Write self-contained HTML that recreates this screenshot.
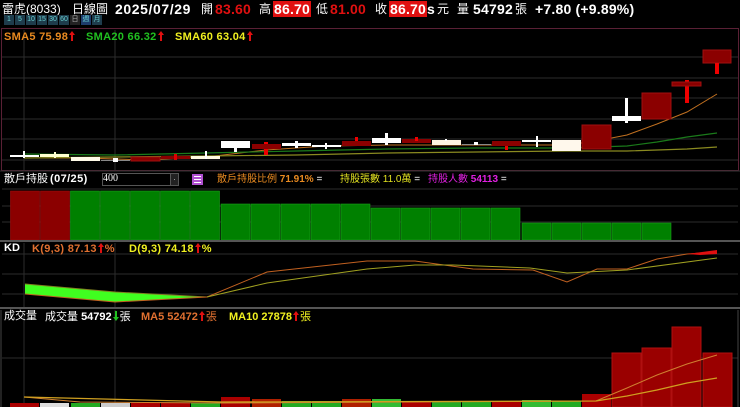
<!DOCTYPE html>
<html><head><meta charset="utf-8"><style>
*{margin:0;padding:0;box-sizing:border-box}
body{width:740px;height:407px;background:#000;overflow:hidden;position:relative;font-family:"Liberation Sans","Noto Sans CJK TC",sans-serif;color:#fff}
.t{position:absolute;white-space:nowrap;line-height:1}
.b{font-weight:bold}
.h{font-size:14px;top:2px;letter-spacing:0.2px}
.c{font-size:12px;top:3px;letter-spacing:0}
.s{font-size:11px}
.l{letter-spacing:0.3px}
.btn{position:absolute;top:15px;width:10px;height:10px;background:#1e3c4c;color:#6cc;font-size:7px;text-align:center;line-height:10px}
.ar{display:inline-block;width:6px;height:10px;vertical-align:-1px;margin:0 1px}
</style></head><body>
<svg width="0" height="0" style="position:absolute"><defs>
<symbol id="up" viewBox="0 0 6 10"><path d="M3 0 L6 4 L4 4 L4 10 L2 10 L2 4 L0 4Z" fill="#e01010"/></symbol>
<symbol id="dn" viewBox="0 0 6 10"><path d="M3 10 L6 6 L4 6 L4 0 L2 0 L2 6 L0 6Z" fill="#20c020"/></symbol>
</defs></svg>
<svg width="740" height="407" style="position:absolute;left:0;top:0">
<rect x="1.5" y="28.5" width="737" height="142" fill="none" stroke="#5a2035"/>
<g stroke="#2c2c2c" stroke-width="1">
<line x1="2" y1="57" x2="738" y2="57"/><line x1="2" y1="78" x2="738" y2="78"/><line x1="2" y1="98" x2="738" y2="98"/><line x1="2" y1="119" x2="738" y2="119"/><line x1="2" y1="139" x2="738" y2="139"/><line x1="2" y1="160" x2="738" y2="160"/>
<line x1="24" y1="30" x2="24" y2="170"/><line x1="115" y1="30" x2="115" y2="170"/>
</g>
<polyline fill="none" stroke="#c07020" stroke-width="1" points="24,158 85,158 145,160 206,157 266,150 326,146 386,145 446,145 506,145 566,145 596,141 627,135 657,124 687,112 717,94"/>
<polyline fill="none" stroke="#1a7a1a" stroke-width="1.2" points="24,154 115,155 206,153 296,151 386,149 476,148 566,148 627,146 657,142 687,137 717,133"/>
<polyline fill="none" stroke="#8a8a20" stroke-width="1.2" points="24,158 115,157 206,156 296,155 386,153 476,152 566,151 627,151 687,149 717,147"/>
<g>
<rect x="23" y="151" width="2" height="7" fill="#fff"/><rect x="10" y="155" width="29" height="2" fill="#fff"/>
<rect x="40" y="154" width="29" height="3" fill="#ffffd0"/><rect x="54" y="152" width="2" height="6" fill="#ffffd0"/>
<rect x="71" y="157" width="29" height="4" fill="#fffbe8"/>
<rect x="101" y="160" width="29" height="1" fill="#888"/><rect x="113" y="158" width="5" height="4" fill="#fff"/>
<rect x="131" y="157" width="29" height="4" fill="#8b0000" stroke="#a01010"/>
<rect x="161" y="156" width="29" height="3" fill="#8b0000"/><rect x="174" y="154" width="3" height="6" fill="#d00"/>
<rect x="191" y="156" width="29" height="3" fill="#fffbe0"/><rect x="205" y="151" width="2" height="8" fill="#fff"/>
<rect x="221" y="141" width="29" height="7" fill="#fff"/><rect x="234" y="148" width="3" height="4" fill="#fff"/>
<rect x="264" y="142" width="4" height="13" fill="#e00"/><rect x="252" y="144" width="29" height="5" fill="#8b0000"/>
<rect x="282" y="143" width="29" height="3" fill="#fff"/><rect x="295" y="141" width="3" height="7" fill="#fff"/>
<rect x="312" y="145" width="29" height="2" fill="#fff"/><rect x="325" y="143" width="2" height="6" fill="#fff"/>
<rect x="355" y="137" width="3" height="9" fill="#e00"/><rect x="342" y="141" width="29" height="5" fill="#8b0000"/>
<rect x="385" y="133" width="3" height="12" fill="#fff"/><rect x="372" y="138" width="29" height="5" fill="#fff"/>
<rect x="402" y="139" width="29" height="4" fill="#8b0000"/><rect x="415" y="137" width="3" height="4" fill="#e00"/>
<rect x="432" y="140" width="29" height="5" fill="#fff5e0"/><rect x="445" y="139" width="2" height="2" fill="#fff"/>
<rect x="462" y="144" width="29" height="1" fill="#888"/><rect x="474" y="142" width="4" height="3" fill="#fff"/>
<rect x="492" y="141" width="29" height="5" fill="#8b0000"/><rect x="505" y="146" width="3" height="4" fill="#e00"/>
<rect x="536" y="136" width="2" height="11" fill="#fff"/><rect x="522" y="140" width="29" height="2" fill="#fff"/>
<rect x="552" y="140" width="29" height="11" fill="#fff8ec"/>
<rect x="582" y="125" width="29" height="24" fill="#8b0000" stroke="#a01010"/>
<rect x="625" y="98" width="3" height="25" fill="#fff"/><rect x="612" y="116" width="29" height="5" fill="#fff"/>
<rect x="642" y="93" width="29" height="26" fill="#8b0000" stroke="#a01010"/>
<rect x="685" y="80" width="4" height="23" fill="#e00"/><rect x="672" y="82" width="29" height="4" fill="#8b0000" stroke="#a01010"/>
<rect x="703" y="50" width="28" height="13" fill="#8b0000" stroke="#a01010"/><rect x="715" y="63" width="4" height="11" fill="#e00"/>
</g>
<line x1="0" y1="171" x2="740" y2="171" stroke="#333"/>
<g stroke="#2c2c2c"><line x1="2" y1="189" x2="738" y2="189"/><line x1="2" y1="206" x2="738" y2="206"/><line x1="2" y1="222" x2="738" y2="222"/></g>
<g stroke="#1aa01a" stroke-width="0.6">
<rect x="10.5" y="191" width="29" height="49" fill="#8b0000" stroke="#a01010"/>
<rect x="40.5" y="191" width="29" height="49" fill="#8b0000" stroke="#a01010"/>
<rect x="70.5" y="191" width="29" height="49" fill="#008000"/><rect x="100.5" y="191" width="29" height="49" fill="#008000"/><rect x="130.5" y="191" width="29" height="49" fill="#008000"/><rect x="160.5" y="191" width="29" height="49" fill="#008000"/><rect x="190.5" y="191" width="29" height="49" fill="#008000"/>
<rect x="221" y="204" width="29" height="36" fill="#008000"/><rect x="251" y="204" width="29" height="36" fill="#008000"/><rect x="281" y="204" width="29" height="36" fill="#008000"/><rect x="311" y="204" width="29" height="36" fill="#008000"/><rect x="341" y="204" width="29" height="36" fill="#008000"/>
<rect x="371" y="208" width="29" height="32" fill="#008000"/><rect x="401" y="208" width="29" height="32" fill="#008000"/><rect x="431" y="208" width="29" height="32" fill="#008000"/><rect x="461" y="208" width="29" height="32" fill="#008000"/><rect x="491" y="208" width="29" height="32" fill="#008000"/>
<rect x="522" y="223" width="29" height="17" fill="#008000"/><rect x="552" y="223" width="29" height="17" fill="#008000"/><rect x="582" y="223" width="29" height="17" fill="#008000"/><rect x="612" y="223" width="29" height="17" fill="#008000"/><rect x="642" y="223" width="29" height="17" fill="#008000"/>
</g>
<rect x="0" y="240" width="740" height="2" fill="#555"/>
<g stroke="#2c2c2c"><line x1="2" y1="254" x2="738" y2="254"/><line x1="2" y1="274" x2="738" y2="274"/><line x1="2" y1="294" x2="738" y2="294"/><line x1="24" y1="243" x2="24" y2="307"/><line x1="115" y1="243" x2="115" y2="307"/></g>
<polygon fill="#40ff20" points="25,284 115,292 207,297 115,302 25,294"/>
<polyline fill="none" stroke="#808020" points="25,284 115,292 207,297"/>
<polyline fill="none" stroke="#c06020" points="25,294 115,302 207,297 267,272 367,261 415,261 473,269 533,270 567,282 597,269 627,269 657,259 687,254 717,252"/>
<polyline fill="none" stroke="#a0a020" points="207,297 267,283 367,269 415,265 453,265 530,268 567,273 627,270 717,258"/>
<polygon fill="#e01010" points="687,254 717,250 717,254 700,255"/>
<rect x="0" y="307" width="740" height="2" fill="#555"/>
<line x1="2" y1="358" x2="738" y2="358" stroke="#2c2c2c"/>
<line x1="24" y1="310" x2="24" y2="407" stroke="#2c2c2c"/><line x1="115" y1="310" x2="115" y2="407" stroke="#2c2c2c"/>
<line x1="1" y1="310" x2="1" y2="407" stroke="#444"/><line x1="738" y1="310" x2="738" y2="407" stroke="#444"/>
<g>
<rect x="10" y="403" width="29" height="4" fill="#a00"/><rect x="40" y="403" width="29" height="4" fill="#ddd"/><rect x="71" y="403" width="29" height="4" fill="#2a2"/><rect x="101" y="403" width="29" height="4" fill="#ccc"/><rect x="131" y="403" width="29" height="4" fill="#a00"/><rect x="161" y="403" width="29" height="4" fill="#a00"/><rect x="191" y="403" width="29" height="4" fill="#2a2"/>
<rect x="221" y="397" width="29" height="10" fill="#a00"/><rect x="252" y="399" width="29" height="8" fill="#b02000"/><rect x="282" y="401" width="29" height="6" fill="#2a2"/><rect x="312" y="401" width="29" height="6" fill="#2a2"/><rect x="342" y="399" width="29" height="8" fill="#b02000"/><rect x="372" y="399" width="29" height="8" fill="#3b3"/><rect x="402" y="401" width="29" height="6" fill="#a00"/><rect x="432" y="401" width="29" height="6" fill="#2a2"/><rect x="462" y="401" width="29" height="6" fill="#2a2"/><rect x="492" y="401" width="29" height="6" fill="#a00"/><rect x="522" y="400" width="29" height="7" fill="#3b3"/><rect x="552" y="401" width="29" height="6" fill="#2a2"/>
<rect x="582" y="394" width="29" height="13" fill="#a00"/>
<rect x="612" y="353" width="29" height="54" fill="#9a0000" stroke="#b01010"/><rect x="642" y="348" width="29" height="59" fill="#9a0000" stroke="#b01010"/><rect x="672" y="327" width="29" height="80" fill="#9a0000" stroke="#b01010"/><rect x="703" y="353" width="29" height="54" fill="#9a0000" stroke="#b01010"/>
</g>
<polyline fill="none" stroke="#d08030" points="24,397 80,402 222,403 596,401 627,388 657,375 687,364 717,355"/>
<polyline fill="none" stroke="#d0a020" stroke-width="1.2" points="24,397 222,402 596,401 627,396 657,390 687,383 717,378"/>
</svg>

<div class="t h c" style="left:2px">雷虎(8033)</div>
<div class="t h c" style="left:72px">日線圖</div>
<div class="t h b" style="left:115px;letter-spacing:0.6px">2025/07/29</div>
<div class="t h c" style="left:201px">開</div>
<div class="t h b" style="left:215px;color:#e01010">83.60</div>
<div class="t h c" style="left:259px">高</div>
<div class="t h b" style="left:273px;background:#e01010;padding:0 1px;top:1px;height:16px;line-height:16px">86.70</div>
<div class="t h c" style="left:316px">低</div>
<div class="t h b" style="left:330px;color:#e01010">81.00</div>
<div class="t h c" style="left:375px">收</div>
<div class="t h b" style="left:389px;background:#e01010;padding:0 1px;top:1px;height:16px;line-height:16px">86.70</div>
<div class="t h b" style="left:427px">s</div>
<div class="t h c" style="left:437px">元</div>
<div class="t h c" style="left:457px">量</div>
<div class="t h b" style="left:473px">54792</div>
<div class="t h c" style="left:515px">張</div>
<div class="t h b" style="left:535px">+7.80 (+9.89%)</div>

<div class="btn" style="left:4px">1</div><div class="btn" style="left:15px">5</div><div class="btn" style="left:26px">10</div><div class="btn" style="left:37px">15</div><div class="btn" style="left:48px">30</div><div class="btn" style="left:59px">60</div><div class="btn" style="left:70px;background:#222;color:#aaa">日</div><div class="btn" style="left:81px;background:#1e3c6c">週</div><div class="btn" style="left:92px">月</div>

<div class="t s b l" style="left:4px;top:31px;color:#e88a20">SMA5 75.98<svg class="ar"><use href="#up"/></svg></div>
<div class="t s b l" style="left:86px;top:31px;color:#20c020">SMA20 66.32<svg class="ar"><use href="#up"/></svg></div>
<div class="t s b l" style="left:175px;top:31px;color:#f0f020">SMA60 63.04<svg class="ar"><use href="#up"/></svg></div>

<div class="t" style="left:4px;top:174px;font-size:11px">散戶持股</div>
<div class="t b" style="left:50px;top:174px;font-size:11px;letter-spacing:0.4px">(07/25)</div>
<div style="position:absolute;left:102px;top:173px;width:77px;height:13px;border:1px solid #555;background:#000"></div>
<div class="t" style="left:103px;top:174px;font-size:10px;font-family:'Liberation Serif',serif">400</div>
<div style="position:absolute;left:170px;top:174px;width:8px;height:11px;background:#222;border-left:1px solid #555;color:#ccc;font-size:8px;text-align:center;line-height:11px">·</div>
<div style="position:absolute;left:192px;top:174px;width:11px;height:11px;background:#b050d0"><div style="margin:2px;height:1px;background:#fff;box-shadow:0 3px 0 #fff,0 6px 0 #fff"></div></div>
<div class="t" style="left:217px;top:175px;font-size:10px;color:#e88a20">散戶持股比例 <b>71.91%</b> <span style="color:#fff">=</span></div>
<div class="t" style="left:340px;top:175px;font-size:10px;color:#e0e020">持股張數 11.0萬 <span style="color:#fff">=</span></div>
<div class="t" style="left:428px;top:175px;font-size:10px;color:#e020e0">持股人數 <b>54113</b> <span style="color:#fff">=</span></div>

<div class="t s b" style="left:4px;top:243px">KD</div>
<div class="t s b l" style="left:32px;top:243px;color:#e07030">K(9,3) 87.13<svg class="ar"><use href="#up"/></svg>%</div>
<div class="t s b l" style="left:129px;top:243px;color:#f0f020">D(9,3) 74.18<svg class="ar"><use href="#up"/></svg>%</div>

<div class="t s" style="left:4px;top:311px">成交量</div>
<div class="t s" style="left:45px;top:311px">成交量 <b>54792</b><svg class="ar"><use href="#dn"/></svg>張</div>
<div class="t s" style="left:141px;top:311px;color:#e07030"><b>MA5 52472</b><svg class="ar"><use href="#up"/></svg>張</div>
<div class="t s" style="left:229px;top:311px;color:#f0f020"><b>MA10 27878</b><svg class="ar"><use href="#up"/></svg>張</div>
</body></html>
